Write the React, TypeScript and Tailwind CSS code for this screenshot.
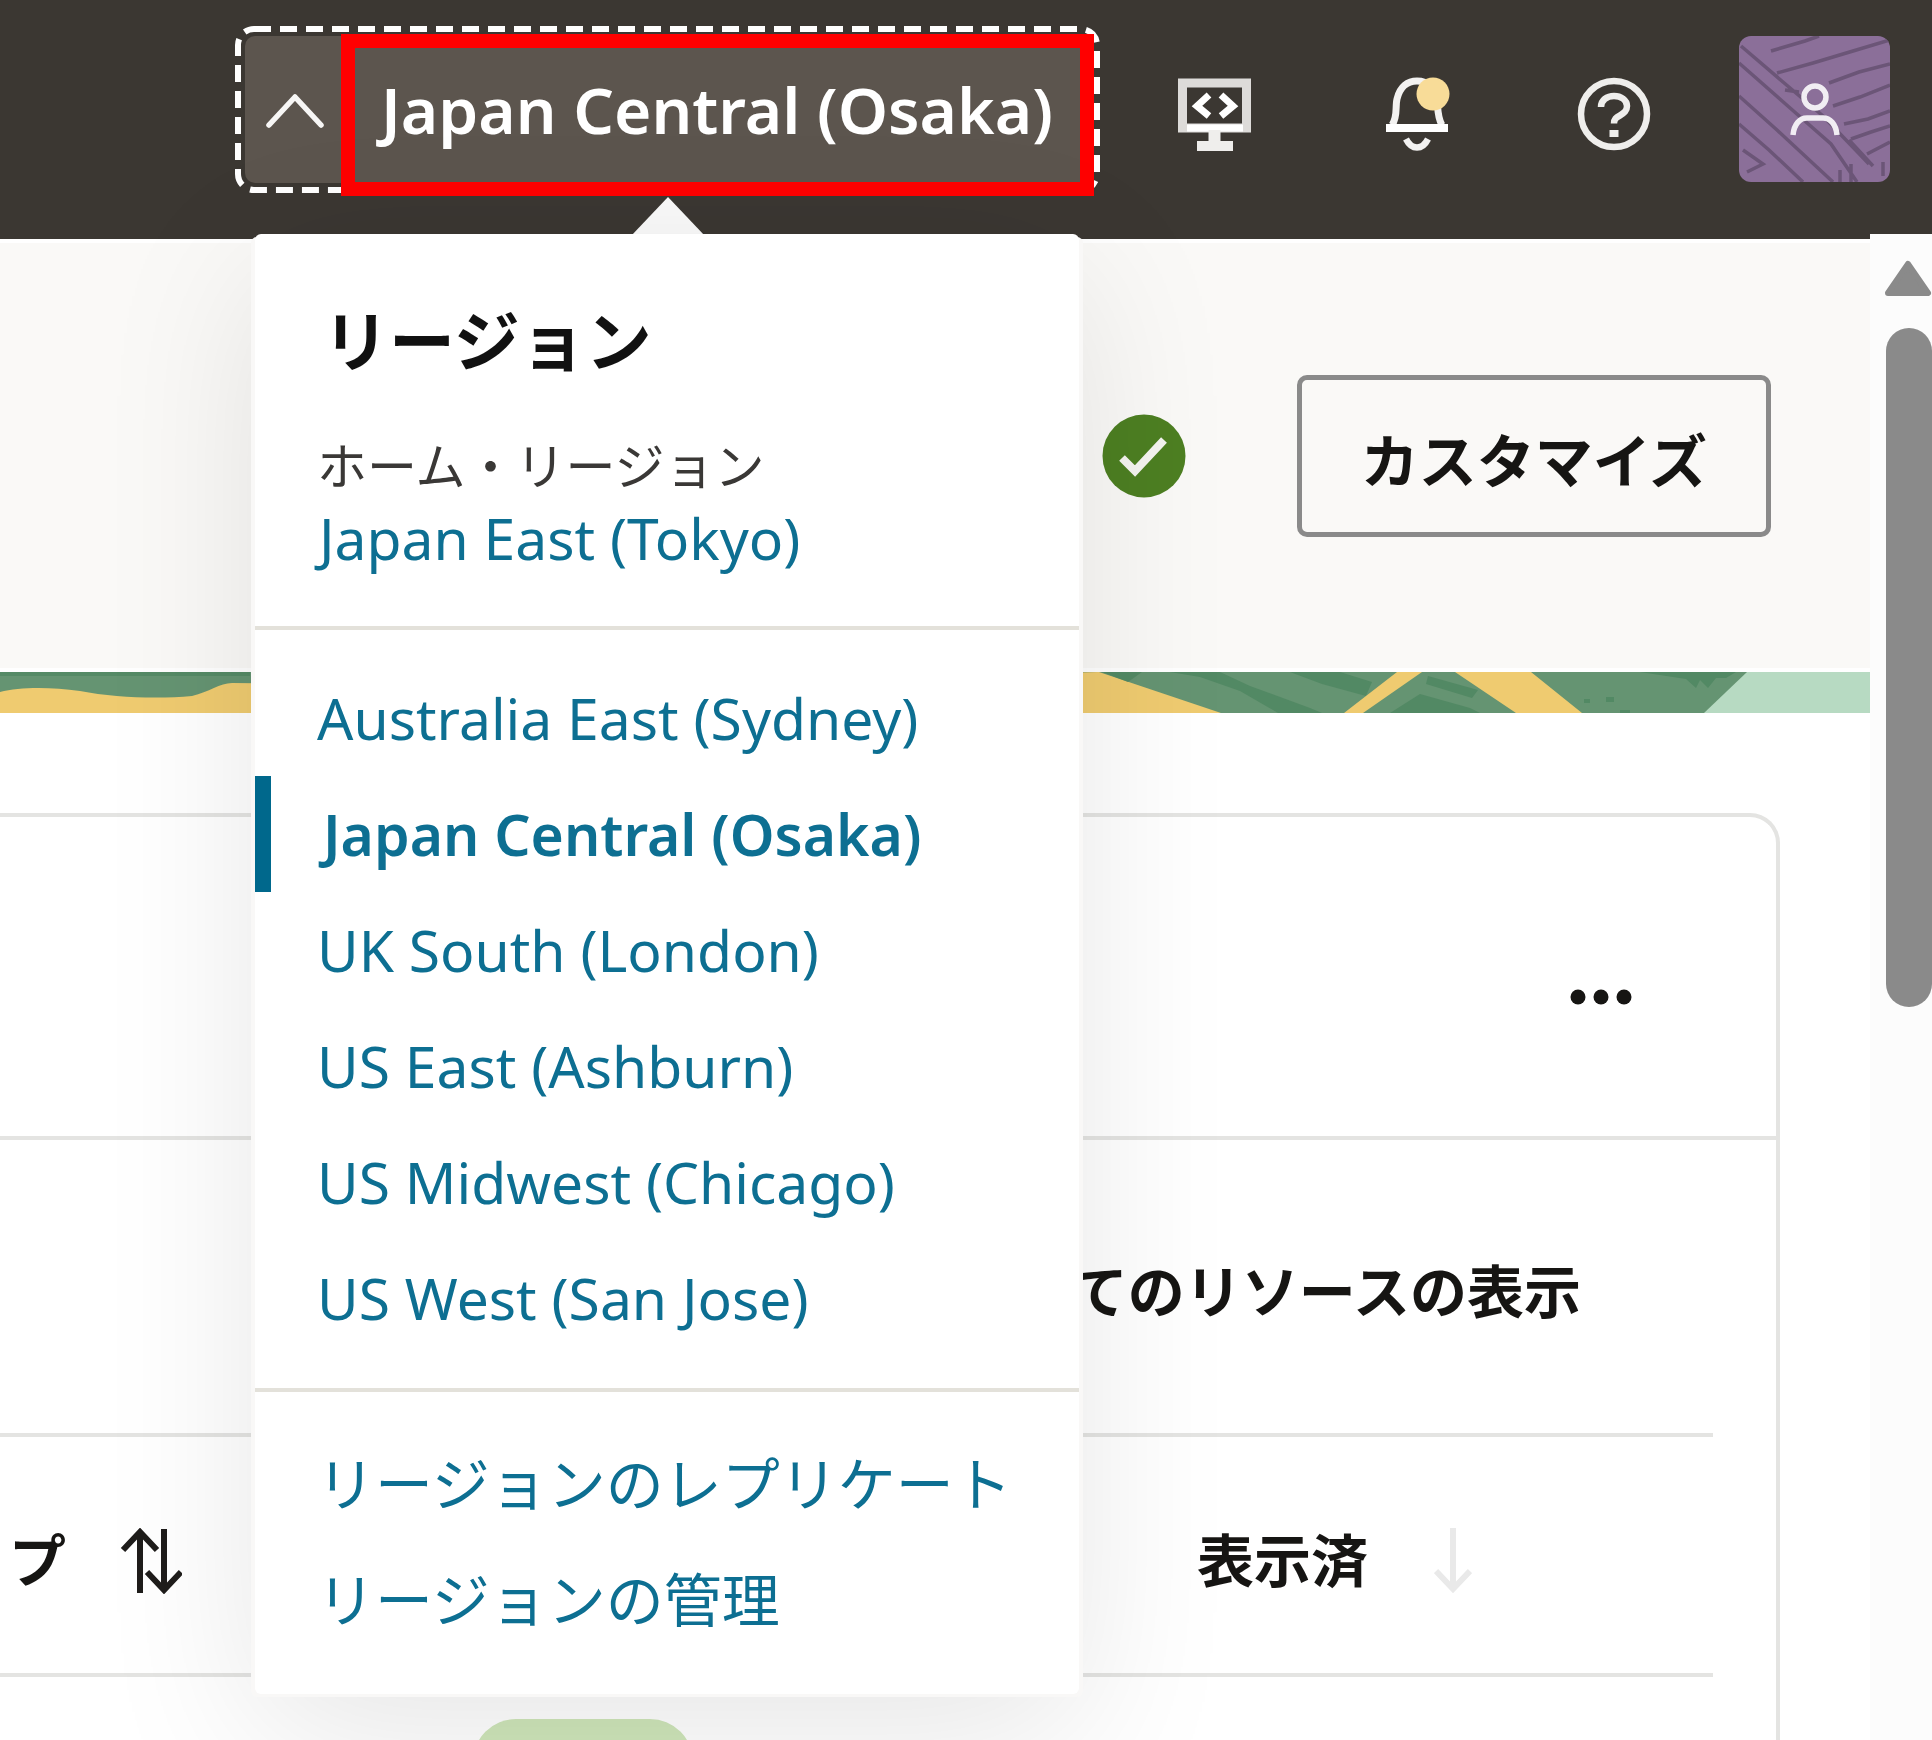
import { useState } from 'react'
import clsx from 'clsx'

const HOME_REGION = 'Japan East (Tokyo)'

const REGIONS = [
  'Australia East (Sydney)',
  'Japan Central (Osaka)',
  'UK South (London)',
  'US East (Ashburn)',
  'US Midwest (Chicago)',
  'US West (San Jose)',
]

const REGION_LINKS = ['リージョンのレプリケート', 'リージョンの管理']

function ChevronUp() {
  return (
    <svg viewBox="0 0 60 38" className="h-[38px] w-[60px]" fill="none" stroke="#f7f6f5" strokeWidth="5.500" strokeLinecap="round" strokeLinejoin="round">
      <path d="M4 34 30 6l26 28" />
    </svg>
  )
}

function DevToolsIcon() {
  return (
    <svg viewBox="0 0 76 76" className="h-[76px] w-[76px]" fill="none" stroke="#efeeec">
      <rect x="5.500" y="6" width="64" height="45" strokeWidth="9" stroke="#dddbd9" />
      <path d="M10 51h56" strokeWidth="7" stroke="#ffffff" />
      <path d="M37.500 53v12" strokeWidth="12" />
      <path d="M20 69h36" strokeWidth="10" />
      <path d="M32 18 20 29l12 10M44 18l12 11-12 10" strokeWidth="7" stroke="#ffffff" />
    </svg>
  )
}

function BellIcon() {
  return (
    <svg viewBox="0 0 66 76" className="h-[76px] w-[66px]" fill="none" stroke="#f3f2f1">
      <path d="M8 48C14 40 11 30 13 22 16 9 24 4 33 4c11 0 18 7 20 18 1 8 0 18 5 26" strokeWidth="7" />
      <path d="M2 51h62" strokeWidth="8" stroke="#ffffff" />
      <path d="M22 62c3 6 6 8.500 11 8.500s8-2.500 11-8.500" strokeWidth="6.500" />
      <circle cx="49" cy="17" r="16.500" fill="#f8dc98" stroke="none" />
    </svg>
  )
}

function HelpIcon() {
  return (
    <svg viewBox="0 0 74 74" className="h-[74px] w-[74px]" fill="none" stroke="#efeeec">
      <circle cx="37" cy="37" r="33" strokeWidth="6.500" />
      <path d="M24 30c0-7 6-11 13-11s13 4 13 10c0 5-3 7-7 9.500-4 2-6 3.500-6 8" strokeWidth="6.500" />
      <path d="M37 53v7" strokeWidth="9" />
    </svg>
  )
}

function Avatar() {
  return (
    <svg viewBox="0 0 151 146" className="h-[146px] w-[151px] rounded-[12px]" fill="none">
      <path fill="#8b6f99" d="M0 0h151v146H0z" />
      <g stroke="#6b5577" strokeWidth="3.500">
        <path d="M32 15 66 5l14-5M38 37l36-10 40-12 37-11M90 47l30-11 31-8M94 70l27-9 30-12M105 88l24-5 22-8M112 103l20-7 19-6M128 118l23-12" />
        <path d="M2 10 44 46l40 34 46 48M0 27l42 37 50 44 26 38M0 60l38 34 56 52M0 88l30 26 34 32M4 114l20 14-16 8M46 54l14 2M110 104l24 26M101 134v12M112 128v18M144 126v14" />
      </g>
      <g stroke="#f1edf3" strokeWidth="5.500">
        <circle cx="76" cy="61" r="11" />
        <path d="M54 99c1-11 7-17 14-17h16c7 0 13 6 14 17" />
      </g>
    </svg>
  )
}

function StatusCheck() {
  return (
    <svg viewBox="0 0 84 84" className="h-[84px] w-[84px]" fill="none">
      <circle cx="42" cy="42" r="41.500" fill="#4d7f22" />
      <path d="M20 44l13 13 29-31" stroke="#f4f4f0" strokeWidth="8" />
    </svg>
  )
}

function SortIcon() {
  return (
    <svg viewBox="0 0 62 66" className="h-[66px] w-[62px]" fill="none" stroke="#1f1d1b" strokeWidth="6">
      <path d="M20 65V5M3 22 20 4l17 18M44 1v60M27 44l17 18 17-18" />
    </svg>
  )
}

function ArrowDown() {
  return (
    <svg viewBox="0 0 38 66" className="h-[66px] w-[38px]" fill="none" stroke="#e9e9e9" strokeWidth="6">
      <path d="M19 0v60M2 43l17 18 17-18" />
    </svg>
  )
}

function Banner() {
  return (
    <svg viewBox="0 0 1870 41" preserveAspectRatio="xMaxYMid slice" className="block h-[41px] w-full">
      <path fill="#659472" d="M0 0h1870v41H0z" />
      <path fill="#558a66" d="M0 0h250v4H0z" />
      <path fill="#efcb70" d="M0 20c20-5 50-5 80-1 35 7 80 8 112 5 17-4 28-13 40-13l300 2 567-13 122 41H0z" />
      <g fill="#4e8660">
        <path d="M1102 0h40l-14 10zM1170 0h50l30 14 60 22 12 5h-44l-38-22-40-14zM1290 0h50l32 10-6 14-44-12zM1420 22l50 14 10 5h-90zM1428 4l50 14-6 8-46-14z" opacity=".8" />
        <path d="M1640 0h96l-10 6h-10l-8 10-8-8-4 8-10-9zM1584 27h6v4h-6zM1606 25h8v5h-8zM1620 38h10v3h-10z" opacity=".8" />
      </g>
      <path fill="#efcb70" d="M1397 0h25l-59 41h-19zM1455 0h76l51 41h-66z" />
      <path fill="#b7dac2" d="M1747 0h123v41h-166z" />
    </svg>
  )
}

function RegionMenu({ current, onSelect }: { current: string; onSelect: (r: string) => void }) {
  return (
    <div className="absolute left-[20px] top-full z-20 w-[824px] pt-[41px]">
      <svg viewBox="0 0 74 40" className="absolute left-[376px] top-[3px] h-[40px] w-[74px]">
        <path fill="#fafafa" d="M37 1 74 40H0z" />
      </svg>
      <div className="relative rounded-[6px] bg-white text-[57px] text-[#0d6f92] shadow-[4px_3px_0_#f9f8f7,-4px_3px_0_#f9f8f7,0_40px_160px_rgba(0,0,0,0.1)]">
        <div className="border-b-4 border-[#e3e1da] px-[64px] pb-[52px] pt-[66px]">
          <h2 className="pl-[4px] text-[66px] font-bold leading-[80px] text-[#111111]">リージョン</h2>
          <p className="-ml-[2px] mt-[50px] text-[50px] leading-[72px] text-[#3a3836]">ホーム・リージョン</p>
          <a href="#home-region" className="block leading-[72px]">{HOME_REGION}</a>
        </div>
        <ul className="border-b-4 border-[#e3e1da] pb-[32px] pt-[30px]">
          {REGIONS.map((r) => (
            <li key={r}>
              <button
                onClick={() => onSelect(r)}
                className={clsx(
                  'block w-full border-l-[16px] text-left leading-[116px]',
                  r === current ? 'border-[#00688c] pl-[52px] font-semibold' : 'border-transparent pl-[46px]',
                )}
              >
                {r}
              </button>
            </li>
          ))}
        </ul>
        <div className="px-[62px] pb-[36px] pt-[34px] text-[58px] leading-[116px]">
          {REGION_LINKS.map((l) => (
            <a key={l} href="#regions" className="block whitespace-nowrap">{l}</a>
          ))}
        </div>
      </div>
    </div>
  )
}

function Header() {
  const [open, setOpen] = useState(true)
  const [region, setRegion] = useState('Japan Central (Osaka)')

  return (
    <header className="flex h-[234px] shrink-0 items-start justify-end bg-[#3b3732] pr-[42px]">
      <div className="relative z-10 mt-[26px]">
        <button onClick={() => setOpen(!open)} aria-expanded={open} className="relative flex h-[167px] w-[865px] items-center p-[10px]">
          <span className="flex h-full w-full items-center rounded-[10px] bg-[#5c554e] pl-[20px] text-[64px] font-semibold text-white">
            <ChevronUp />
            <span className="ml-[56px] whitespace-nowrap">{region}</span>
          </span>
          <svg className="absolute inset-0 h-full w-full" fill="none">
            <rect x="3" y="3" width="859" height="161" rx="16" stroke="#ffffff" strokeWidth="6" strokeDasharray="17 9" />
          </svg>
          <span className="absolute -bottom-[3px] left-[106px] right-[6px] top-[8px] border-[14px] border-[#ff0000]" />
        </button>
        {open && <RegionMenu current={region} onSelect={setRegion} />}
      </div>
      <button aria-label="開発者ツール" className="ml-[77px] mt-[77px]"><DevToolsIcon /></button>
      <button aria-label="お知らせ" className="ml-[131px] mt-[77px]"><BellIcon /></button>
      <button aria-label="ヘルプ" className="ml-[127px] mt-[77px]"><HelpIcon /></button>
      <button aria-label="プロファイル" className="ml-[88px] mt-[36px]"><Avatar /></button>
    </header>
  )
}

export default function App() {
  return (
    <div className="flex h-screen flex-col overflow-hidden bg-white font-['Noto_Sans','Noto_Sans_CJK_JP',sans-serif] text-[#161513]">
      <Header />

      <div className="flex min-h-0 flex-1">
        <main className="min-w-0 flex-1 overflow-hidden border-t-[5px] border-[#3b3732]">
          <div className="flex h-[433px] items-center justify-end gap-[111px] border-y-4 border-white bg-[#faf9f7] pr-[99px]">
            <StatusCheck />
            <button className="h-[162px] w-[474px] rounded-[10px] border-[5px] border-[#8a8a8a] pt-[10px] text-[58px] font-semibold">カスタマイズ</button>
          </div>
          <Banner />

          {/* Resource card */}
          <section className="mr-[90px] mt-[100px] rounded-tr-[30px] border-r-4 border-t-4 border-[#e4e4e2]">
            <div className="flex h-[323px] items-center justify-end border-b-4 border-[#e4e4e2] pr-[142px] pt-[40px]">
              <button aria-label="アクション">
                <svg viewBox="0 0 66 20" className="h-[20px] w-[66px]" fill="#161513">
                  <circle cx="10" cy="10" r="7.500" />
                  <circle cx="33" cy="10" r="7.500" />
                  <circle cx="56" cy="10" r="7.500" />
                </svg>
              </button>
            </div>
            <div className="pr-[63px]">
              <div className="flex h-[293px] items-center justify-end pr-[132px] pt-[10px] text-[57px] font-semibold">
                <a href="#resources">すべてのリソースの表示</a>
              </div>
              <table className="w-full border-collapse text-left text-[57px]">
                <thead>
                  <tr className="h-[240px] border-y-4 border-[#e4e4e2]">
                    <th className="w-[473px] pl-[9px] pt-[12px] font-semibold">
                      <button className="flex items-center gap-[54px]">プ<SortIcon /></button>
                    </th>
                    <th />
                    <th className="w-[516px] pt-[12px] font-semibold">
                      <button className="flex items-center gap-[66px]">表示済<ArrowDown /></button>
                    </th>
                  </tr>
                </thead>
                <tbody>
                  <tr>
                    <td />
                    <td className="pt-[42px]">
                      <div className="h-[86px] w-[220px] rounded-full bg-[#cfe6ba]" />
                    </td>
                    <td />
                  </tr>
                </tbody>
              </table>
            </div>
          </section>
        </main>

        <div className="flex w-[62px] shrink-0 flex-col items-end bg-[#fcfcfc] pt-[24px]">
          <svg viewBox="0 0 48 40" className="h-[40px] w-[48px]">
            <path fill="#8a8a8a" stroke="#8a8a8a" strokeWidth="6" strokeLinejoin="round" d="M24 6 44 35H4z" />
          </svg>
          <div className="mt-[30px] h-[679px] w-[46px] rounded-full bg-[#8a8a8a]" />
        </div>
      </div>
    </div>
  )
}
